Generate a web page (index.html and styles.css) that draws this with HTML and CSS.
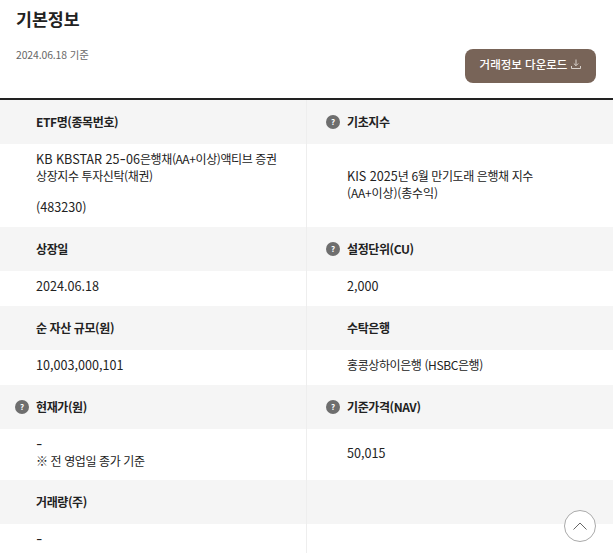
FILE: index.html
```html
<!DOCTYPE html>
<html lang="ko">
<head>
<meta charset="utf-8">
<title>기본정보</title>
<link rel="stylesheet" href="styles.css">
</head>
<body>
<section class="page">
  <header class="top">
    <div class="titles">
      <h2 class="title">기본정보</h2>
      <p class="date">2024.06.18 기준</p>
    </div>
    <button class="download" type="button">거래정보 다운로드
      <svg class="dl-icon" width="10" height="10" viewBox="0 0 10 10" fill="none" stroke="#d9d2cc" stroke-width="1"><path d="M5 0.5V6.5M2.8 4.5L5 6.7L7.2 4.5M0.5 7V9.5H9.5V7"/></svg>
    </button>
  </header>
  <div class="table">
    <div class="col">
      <div class="head">ETF명(종목번호)</div>
      <div class="cell b83"><span class="num">KB KBSTAR 25<span class="dash">-</span>06</span>은행채(AA+이상)액티브 증권<br>상장지수 투자신탁(채권)<span class="code"><span class="num">(483230)</span></span></div>
      <div class="head">상장일</div>
      <div class="cell b35"><span class="num">2024.06.18</span></div>
      <div class="head">순 자산 규모(원)</div>
      <div class="cell b35"><span class="num">10,003,000,101</span></div>
      <div class="head"><span class="q">?</span>현재가(원)</div>
      <div class="cell b51"><span class="dash">-</span><br>※ 전 영업일 종가 기준</div>
      <div class="head">거래량(주)</div>
      <div class="cell last"><span class="dash">-</span></div>
    </div>
    <div class="col right">
      <div class="head"><span class="q">?</span>기초지수</div>
      <div class="cell b83"><span class="num">KIS 2025</span>년 6월 만기도래 은행채 지수<br><span class="wide">(AA+이상)(총수익)</span></div>
      <div class="head"><span class="q">?</span>설정단위(CU)</div>
      <div class="cell b35"><span class="num">2,000</span></div>
      <div class="head">수탁은행</div>
      <div class="cell b35">홍콩상하이은행 (HSBC은행)</div>
      <div class="head"><span class="q">?</span>기준가격(NAV)</div>
      <div class="cell b51"><span class="num">50,015</span></div>
      <div class="head"></div>
      <div class="cell last"></div>
    </div>
  </div>
  <button class="totop" type="button" aria-label="맨 위로">
    <svg width="16" height="10" viewBox="0 0 16 10" fill="none" stroke="#666" stroke-width="1"><path d="M1.5 8.5L8 2L14.5 8.5"/></svg>
  </button>
</section>
</body>
</html>
```
FILE: styles.css
```css
* { box-sizing: border-box; }
html, body { margin: 0; padding: 0; background: #fff; }
body {
  width: 613px;
  height: 553px;
  overflow: hidden;
  font-family: "Noto Sans CJK KR", "Noto Sans", sans-serif;
  color: #222;
}
.page { position: relative; height: 553px; overflow: hidden; }
.top {
  height: 98px;
  padding: 0 17px 0 16px;
  display: flex;
  justify-content: space-between;
}
.title {
  margin: 0;
  padding-top: 5px;
  font-size: 17.3px;
  line-height: 27px;
  font-weight: 700;
  color: #222;
}
.date {
  margin: 16px 0 0;
  font-size: 10.4px;
  line-height: 14px;
  letter-spacing: -0.1px;
  color: #666;
}
.download {
  margin-top: 49px;
  width: 131px;
  height: 34px;
  border: 0;
  border-radius: 8px;
  background: #786458;
  color: #fff;
  font: 500 11.5px/16px "Noto Sans CJK KR", sans-serif;
  display: flex;
  align-items: center;
  justify-content: center;
  gap: 4px;
  padding: 0 0 4px;
}
.dl-icon { flex: none; }
.table {
  border-top: 2px solid #222;
  display: grid;
  grid-template-columns: 306px 307px;
}
.right { border-left: 1px solid #eee; }
.head {
  height: 44px;
  background: #f5f5f5;
  padding: 0 0 1px 36px;
  display: flex;
  align-items: center;
  font-size: 12px;
  font-weight: 700;
  letter-spacing: -0.4px;
  color: #222;
  position: relative;
}
.right .head, .right .cell { padding-left: 40px; }
.q {
  position: absolute;
  left: 15px;
  top: 15px;
  width: 14px;
  height: 14px;
  border-radius: 50%;
  background: #6e6e6e;
  color: #fff;
  font-size: 8px;
  line-height: 14px;
  font-weight: 700;
  letter-spacing: 0;
  text-align: center;
}
.right .q { left: 19px; }
.cell {
  padding: 0 24px 0 36px;
  font-size: 12px;
  line-height: 17px;
  letter-spacing: -0.4px;
  color: #222;
}
.num {
  font-size: 12.6px;
  line-height: 1;
  letter-spacing: 0;
}
.wide { letter-spacing: -0.15px; }
.dash {
  font-family: "Inter", sans-serif;
  font-size: 14px;
  line-height: 1;
  letter-spacing: 0;
}
.code { display: block; margin-top: 14px; }
.b83 { height: 83px; padding-top: 6px; }
.right .b83 { padding-top: 23px; }
.b35 { height: 35px; padding-top: 6px; }
.b51 { height: 51px; padding-top: 6px; }
.right .b51 { padding-top: 15px; }
.last { height: 29px; padding-top: 6px; }
.totop {
  position: absolute;
  left: 564px;
  top: 510px;
  width: 32px;
  height: 32px;
  padding: 0;
  border: 1px solid #aaa;
  border-radius: 50%;
  background: #fff;
  display: flex;
  align-items: center;
  justify-content: center;
}
```
